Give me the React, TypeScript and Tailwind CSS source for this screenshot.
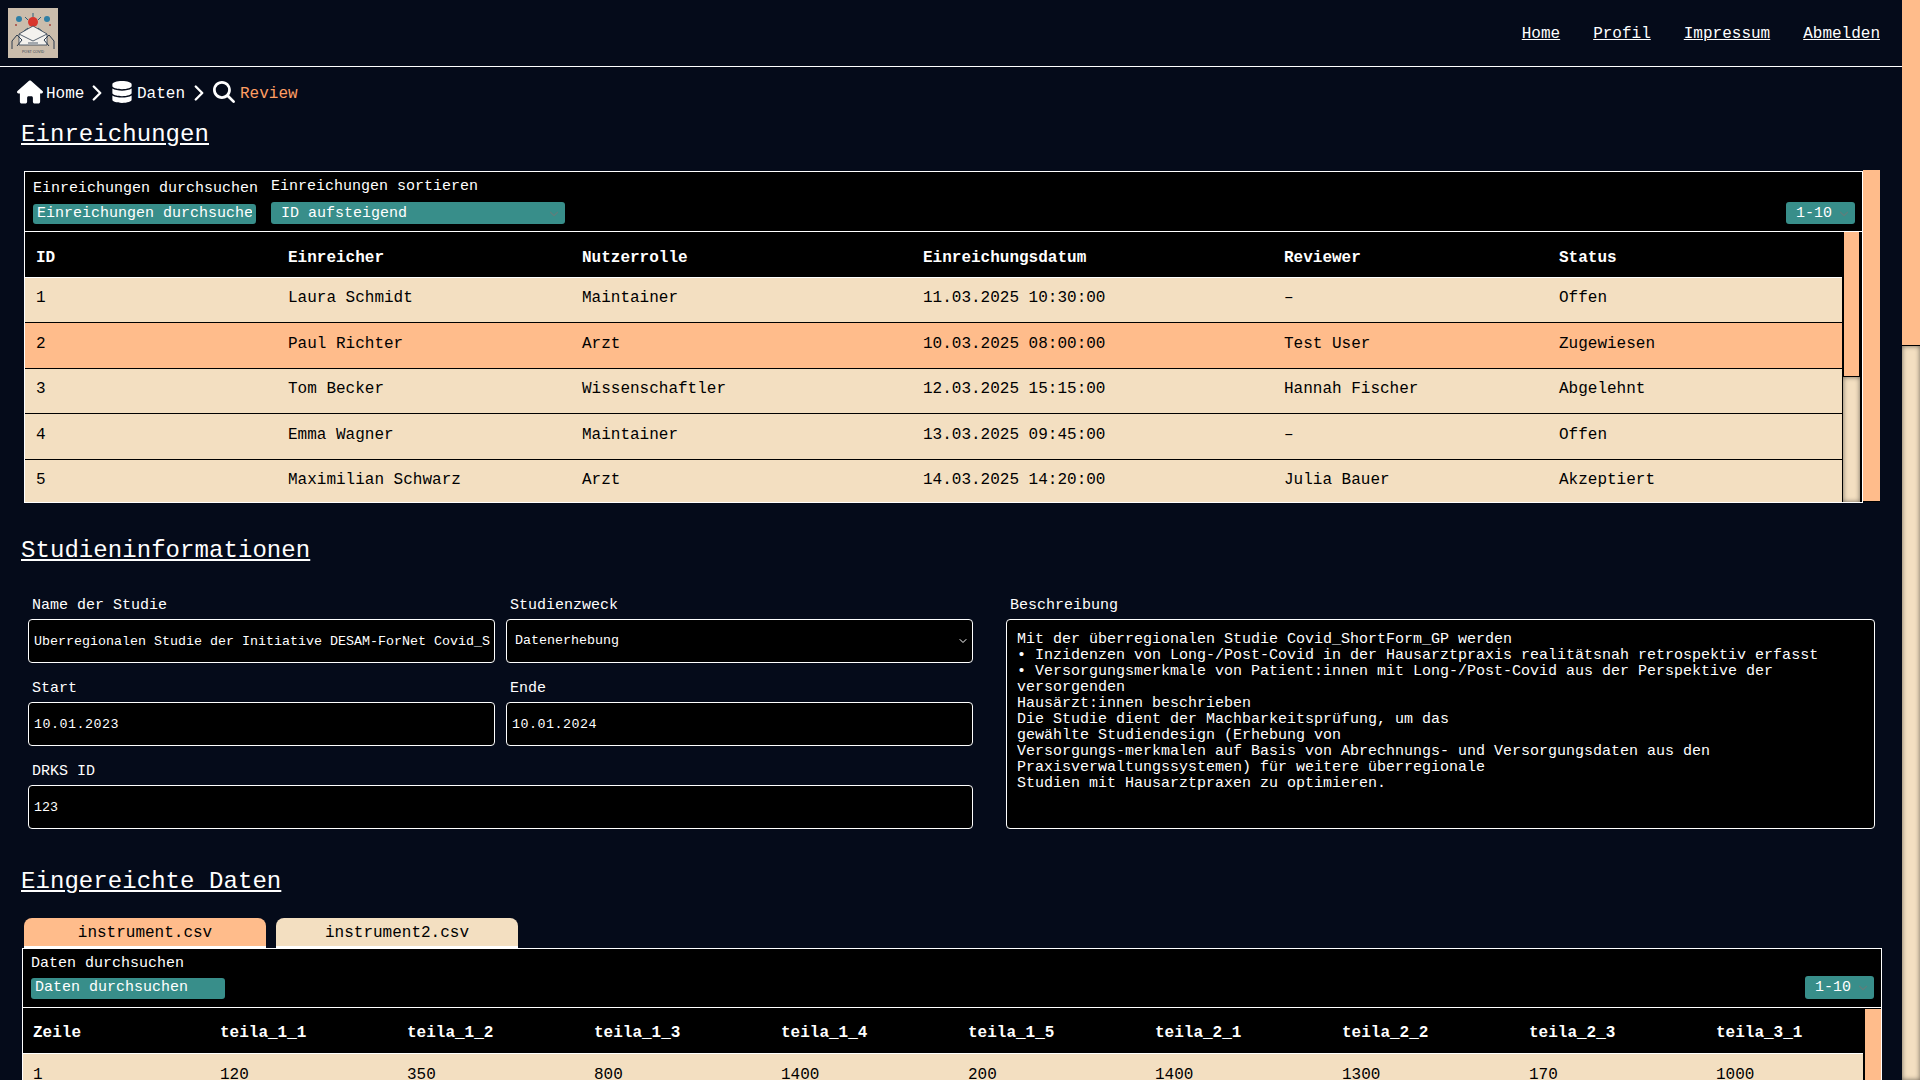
import React from "react";
import { FaDatabase } from "react-icons/fa";
import { FaHouse, FaMagnifyingGlass } from "react-icons/fa6";
import { ChevronRight, ChevronDown } from "lucide-react";

const font = "font-['Liberation_Mono',monospace]";

function Logo() {
  return (
    <svg width="50" height="50" viewBox="0 0 50 50" className="block shrink-0">
      <rect width="50" height="50" fill="#cbbdac" />
      <g stroke="#2f5f78" strokeWidth="1" fill="none">
        <line x1="25" y1="5" x2="25" y2="9" />
        <line x1="17" y1="9" x2="20" y2="12" />
        <line x1="33" y1="9" x2="30" y2="12" />
        <line x1="20" y1="20" x2="16" y2="23" />
        <line x1="30" y1="20" x2="34" y2="23" />
      </g>
      <circle cx="11" cy="11" r="3" fill="#2f7fa5" />
      <circle cx="39" cy="11" r="3" fill="#2f7fa5" />
      <circle cx="8" cy="17" r="1" fill="#a5443c" />
      <circle cx="42" cy="17" r="1" fill="#a5443c" />
      <circle cx="25" cy="14" r="5" fill="#d8362c" />
      <path d="M11 26 L25 18 L39 26 L39 37 L11 37 Z" fill="#f4f2ee" stroke="#2c3b4d" strokeWidth="0.8" />
      <path d="M11 26 L25 33 L39 26" fill="none" stroke="#2c3b4d" strokeWidth="0.8" />
      <path d="M20 35 H30" stroke="#2c3b4d" strokeWidth="0.8" />
      <path d="M4 41 L4 33 L9 27 L14 32 L9 38 M46 41 L46 33 L41 27 L36 32 L41 38" fill="none" stroke="#2c3b4d" strokeWidth="1" />
      <text x="25" y="44.5" textAnchor="middle" fontSize="3.6" fill="#2c3b4d" fontFamily="Liberation Sans, sans-serif">POST COVID</text>
    </svg>
  );
}

function SectionTitle({ children, className = "" }: { children: React.ReactNode; className?: string }) {
  return <h2 className={`text-[24px] leading-[28px] underline text-white ml-[21px] tracking-[0.06px] ${className}`}>{children}</h2>;
}

function Track({ thumb }: { thumb: number }) {
  return (
    <div className="flex flex-col w-[17px] h-full">
      <div className="bg-[#ffbc8b] border border-black border-t-0" style={{ height: thumb }} />
      <div className="flex-1 bg-[#f3dfc1] shadow-[inset_0_0_5px_rgba(0,0,0,0.55)]" />
    </div>
  );
}

function TealSelect({ label, className }: { label: string; className: string }) {
  return (
    <div className={`relative ${className}`}>
      <select className={`${font} appearance-none block w-full h-full bg-[#388e8a] text-white rounded-[3px] text-[15px] leading-none pl-[10px] outline-none`}>
        <option>{label}</option>
      </select>
      <ChevronDown size={14} className="absolute right-[4px] top-[5px] text-[#5f7f7c] pointer-events-none" />
    </div>
  );
}

const subs = [
  ["1", "Laura Schmidt", "Maintainer", "11.03.2025 10:30:00", "–", "Offen"],
  ["2", "Paul Richter", "Arzt", "10.03.2025 08:00:00", "Test User", "Zugewiesen"],
  ["3", "Tom Becker", "Wissenschaftler", "12.03.2025 15:15:00", "Hannah Fischer", "Abgelehnt"],
  ["4", "Emma Wagner", "Maintainer", "13.03.2025 09:45:00", "–", "Offen"],
  ["5", "Maximilian Schwarz", "Arzt", "14.03.2025 14:20:00", "Julia Bauer", "Akzeptiert"],
];
const subCols = [252, 294, 341, 361, 275, 294];
const subHead = ["ID", "Einreicher", "Nutzerrolle", "Einreichungsdatum", "Reviewer", "Status"];
const dataHead = ["Zeile", "teila_1_1", "teila_1_2", "teila_1_3", "teila_1_4", "teila_1_5", "teila_2_1", "teila_2_2", "teila_2_3", "teila_3_1"];
const dataRow = ["1", "120", "350", "800", "1400", "200", "1400", "1300", "170", "1000"];

function Field({ label, children, className = "" }: { label: string; children: React.ReactNode; className?: string }) {
  return (
    <div className={`flex flex-col ${className}`}>
      <label className="text-[15px] leading-[17px] text-white ml-[4px] mb-[5px]">{label}</label>
      {children}
    </div>
  );
}

const inputCls = `${font} block w-full h-[44px] bg-black border border-white rounded-[4px] text-white text-[13.33px] pl-[5px] pr-[4px] outline-none`;

export default function App() {
  return (
    <div className={`${font} w-[1920px] h-[1080px] overflow-hidden flex bg-[#050b1a] text-white`}>
      <main className="w-[1902px] h-[1080px] overflow-hidden shrink-0">
        <header className="h-[67px] border-b border-white flex items-center justify-between pl-[8px] pr-[22px] pb-[1px]">
          <Logo />
          <nav className="flex gap-[33px] text-[16px] leading-[18px] pt-[2px]">
            {["Home", "Profil", "Impressum", "Abmelden"].map((n) => (
              <a key={n} className="underline text-white">{n}</a>
            ))}
          </nav>
        </header>

        <div className="flex items-center h-[26px] mt-[13px] ml-[17px] text-[16px] text-white">
          <FaHouse size={26} className="mr-[3px] -mt-[2px] w-[26px]" />
          <span className="w-[39px] pt-[2px]">Home</span>
          <ChevronRight size={26} strokeWidth={2.2} className="mx-[-1px] -mt-[1px]" />
          <FaDatabase size={22} className="mx-[2px] -mt-[2px]" />
          <span className="w-[48px] ml-[2px] pt-[2px]">Daten</span>
          <ChevronRight size={26} strokeWidth={2.2} className="ml-[1px] mr-[-1px] -mt-[1px]" />
          <FaMagnifyingGlass size={22} className="mx-[2px] -mt-[2px]" />
          <span className="ml-[3px] pt-[2px] text-[#ff9e63]">Review</span>
        </div>

        <SectionTitle className="mt-[15px]">Einreichungen</SectionTitle>

        {/* Submissions */}
        <div className="flex items-start ml-[24px] mt-[22px]">
          <div className="w-[1839px] h-[332px] border border-white flex flex-col bg-black">
            <div className="h-[60px] border-b border-white flex items-start shrink-0 relative">
              <div className="ml-[8px] mt-[8px] w-[224px]">
                <div className="text-[15px] leading-[17px] whitespace-nowrap">Einreichungen durchsuchen</div>
                <input placeholder="Einreichungen durchsuchen" className={`${font} block mt-[7px] w-[223px] h-[20px] bg-[#388e8a] rounded-[3px] px-[4px] text-[15px] text-white placeholder:text-white outline-none`} />
              </div>
              <div className="ml-[14px] mt-[6px]">
                <div className="text-[15px] leading-[17px]">Einreichungen sortieren</div>
                <TealSelect label="ID aufsteigend" className="mt-[7px] w-[294px] h-[22px]" />
              </div>
              <TealSelect label="1-10" className="ml-auto mr-[7px] mt-[30px] w-[69px] h-[22px]" />
            </div>
            <div className="flex flex-1 min-h-0">
              <div className="flex-1 min-w-0 overflow-hidden">
                <table className="table-fixed border-collapse w-[1817px] text-[16px]">
                  <colgroup>
                    {subCols.map((w, i) => <col key={i} style={{ width: w }} />)}
                  </colgroup>
                  <thead>
                    <tr className="h-[45px] bg-black text-white border-b border-white">
                      {subHead.map((h) => <th key={h} className="text-left font-bold pl-[11px] pr-[9px] pt-[7px]">{h}</th>)}
                    </tr>
                  </thead>
                  <tbody>
                    {subs.map((r, i) => (
                      <tr key={i} className={`h-[45.5px] text-black border-b border-black ${i === 1 ? "bg-[#ffbc8b]" : "bg-[#f3dfc1]"}`}>
                        {r.map((c, j) => <td key={j} className="pl-[11px] pr-[9px] pb-[3px]">{c}</td>)}
                      </tr>
                    ))}
                  </tbody>
                </table>
              </div>
              <div className="w-[20px] pl-[1px] shrink-0 h-full bg-black">
                <Track thumb={145} />
              </div>
            </div>
          </div>
          <div className="w-[17px] h-[332px] -mt-[1px] bg-[#ffbc8b] border-b border-black shrink-0" />
        </div>

        <SectionTitle className="mt-[34px]">Studieninformationen</SectionTitle>

        {/* Form */}
        <div className="flex items-start ml-[28px] mt-[32px]">
          <div className="w-[945px] grid grid-cols-[467px_467px] gap-x-[11px] gap-y-[17px]">
            <Field label="Name der Studie">
              <input readOnly value="Uberregionalen Studie der Initiative DESAM-ForNet Covid_ShortForm_GP" className={inputCls} />
            </Field>
            <Field label="Studienzweck">
              <div className="relative">
                <select className={`${inputCls} appearance-none pl-[8px]`}><option>Datenerhebung</option></select>
                <ChevronDown size={12} className="absolute right-[4px] top-[16px] text-white pointer-events-none" />
              </div>
            </Field>
            <Field label="Start">
              <input readOnly value="10.01.2023" className={`${inputCls} tracking-[0.5px]`} />
            </Field>
            <Field label="Ende">
              <input readOnly value="10.01.2024" className={`${inputCls} tracking-[0.5px]`} />
            </Field>
            <Field label="DRKS ID" className="col-span-2">
              <input readOnly value="123" className={inputCls} />
            </Field>
          </div>
          <Field label="Beschreibung" className="ml-[33px] w-[869px]">
            <div className="h-[210px] bg-black border border-white rounded-[4px] px-[10px] pt-[12px] text-[15px] leading-[16px] text-white whitespace-pre">
{`Mit der überregionalen Studie Covid_ShortForm_GP werden
• Inzidenzen von Long-/Post-Covid in der Hausarztpraxis realitätsnah retrospektiv erfasst
• Versorgungsmerkmale von Patient:innen mit Long-/Post-Covid aus der Perspektive der
versorgenden
Hausärzt:innen beschrieben
Die Studie dient der Machbarkeitsprüfung, um das
gewählte Studiendesign (Erhebung von
Versorgungs-merkmalen auf Basis von Abrechnungs- und Versorgungsdaten aus den
Praxisverwaltungssystemen) für weitere überregionale
Studien mit Hausarztpraxen zu optimieren.`}
            </div>
          </Field>
        </div>

        <SectionTitle className="mt-[39px]">Eingereichte Daten</SectionTitle>

        {/* Tabs */}
        <div className="flex ml-[24px] mt-[22px] gap-[10px] text-[16px]">
          <div className="w-[242px] h-[30px] pt-[2px] rounded-t-[8px] bg-[#ffbc8b] border-b-2 border-white text-black flex items-center justify-center">instrument.csv</div>
          <div className="w-[242px] h-[30px] pt-[2px] rounded-t-[8px] bg-[#f3dfc1] border-b-2 border-white text-black flex items-center justify-center">instrument2.csv</div>
        </div>
        <div className="ml-[22px] w-[1860px] h-[200px] border border-white border-b-0 bg-black">
          <div className="h-[59px] border-b border-white flex items-start">
            <div className="ml-[8px] mt-[6px]">
              <div className="text-[15px] leading-[17px]">Daten durchsuchen</div>
              <input placeholder="Daten durchsuchen" className={`${font} block mt-[6px] w-[194px] h-[21px] bg-[#388e8a] rounded-[3px] px-[4px] text-[15px] text-white placeholder:text-white outline-none`} />
            </div>
            <TealSelect label="1-10" className="ml-auto mr-[7px] mt-[27px] w-[69px] h-[23px]" />
          </div>
          <div className="flex">
            <table className="table-fixed border-collapse w-[1840px] text-[16px]">
              <colgroup>
                {dataHead.map((_, i) => <col key={i} style={{ width: i === 9 ? 157 : 187 }} />)}
              </colgroup>
              <thead>
                <tr className="h-[45px] border-b border-white">
                  {dataHead.map((h) => <th key={h} className="text-left font-bold px-[10px] pt-[5px]">{h}</th>)}
                </tr>
              </thead>
              <tbody>
                <tr className="h-[45px] bg-[#f3dfc1] text-black">
                  {dataRow.map((c, i) => <td key={i} className="align-top px-[10px] pt-[9px]">{c}</td>)}
                </tr>
              </tbody>
            </table>
            <div className="w-[18px] h-[140px] bg-[#ffbc8b] border-l border-black mt-[1px] ml-[1px]" />
          </div>
        </div>
      </main>
      <aside className="w-[18px] h-[1080px] flex flex-col shrink-0">
        <div className="h-[346px] bg-[#ffbc8b] border-b border-black" />
        <div className="flex-1 bg-[#f3dfc1] shadow-[inset_0_0_5px_rgba(0,0,0,0.55)]" />
      </aside>
    </div>
  );
}
